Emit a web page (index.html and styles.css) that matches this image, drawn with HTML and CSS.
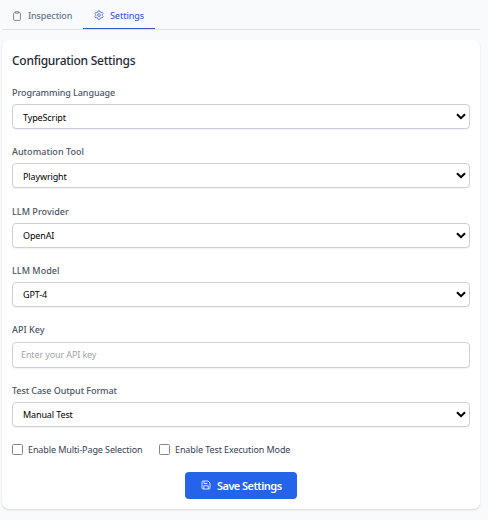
FILE: index.html
```html
<!DOCTYPE html>
<html lang="en">
<head>
<meta charset="utf-8">
<title>Configuration Settings</title>
<link rel="stylesheet" href="styles.css">
</head>
<body>
<div class="app">
  <nav class="tabs">
    <a class="tab tab-inspection">
      <svg class="tab-icon" viewBox="0 0 10 10"><path d="M3.4 1.4H2.6a1 1 0 0 0-1 1v6a1 1 0 0 0 1 1h4.8a1 1 0 0 0 1-1v-6a1 1 0 0 0-1-1h-.8M3.4.7h3.2v1.5H3.4z"/></svg>
      <span>Inspection</span>
    </a>
    <a class="tab tab-settings active">
      <svg class="tab-icon" viewBox="1 1 22 22"><path stroke-width="2" d="M10 3h4l.7 2.6 1.8 1 2.6-.7 2 3.5-1.9 1.9v1.8l1.9 1.9-2 3.5-2.6-.7-1.8 1L14 21.500h-4l-.7-2.700-1.8-1-2.600.7-2-3.500 1.900-1.900v-1.800L2.900 9.400l2-3.500 2.600.7 1.800-1z"/><circle cx="12" cy="12.200" r="3" stroke-width="2"/></svg>
      <span>Settings</span>
    </a>
  </nav>
  <main class="card">
    <h1 class="title"><span>Configuration Settings</span></h1>
    <div class="field">
      <div class="label"><span>Programming Language</span></div>
      <div class="select"><span>TypeScript</span><svg class="chevron" viewBox="0 0 10 7"><path d="M1 1.2l4 4 4-4"/></svg></div>
    </div>
    <div class="field">
      <div class="label label-short"><span>Automation Tool</span></div>
      <div class="select"><span>Playwright</span><svg class="chevron" viewBox="0 0 10 7"><path d="M1 1.2l4 4 4-4"/></svg></div>
    </div>
    <div class="field">
      <div class="label label-short"><span>LLM Provider</span></div>
      <div class="select"><span>OpenAI</span><svg class="chevron" viewBox="0 0 10 7"><path d="M1 1.2l4 4 4-4"/></svg></div>
    </div>
    <div class="field">
      <div class="label label-short"><span>LLM Model</span></div>
      <div class="select"><span>GPT-4</span><svg class="chevron" viewBox="0 0 10 7"><path d="M1 1.2l4 4 4-4"/></svg></div>
    </div>
    <div class="field field-input">
      <div class="label label-short"><span>API Key</span></div>
      <input class="input" type="text" placeholder="Enter your API key">
    </div>
    <div class="field">
      <div class="label"><span>Test Case Output Format</span></div>
      <div class="select"><span>Manual Test</span><svg class="chevron" viewBox="0 0 10 7"><path d="M1 1.2l4 4 4-4"/></svg></div>
    </div>
    <div class="checks">
      <label class="check"><i class="box"></i><span>Enable Multi-Page Selection</span></label>
      <label class="check"><i class="box"></i><span>Enable Test Execution Mode</span></label>
    </div>
    <button class="save">
      <svg class="save-icon" viewBox="0 0 10 10"><path d="M1 2a1 1 0 0 1 1-1h5l2 2v5a1 1 0 0 1-1 1H2a1 1 0 0 1-1-1zM3 1v2.500h3.500M2.800 9V5.700h4.400V9"/></svg>
      <span>Save Settings</span>
    </button>
  </main>
</div>
</body>
</html>
```
FILE: styles.css
```css
* { box-sizing: border-box; }
body {
  margin: 0;
  height: 520px;
  overflow: hidden;
  background: #f9fafb;
  font-family: "Noto Sans", "Open Sans", sans-serif;
  font-size: 9px;
  color: #374151;
}
.app { width: 483px; height: 520px; padding: 0 3px 0 2px; background: #f8fafc; }
.tabs { display: flex; height: 30px; border-bottom: 1px solid #dfe3e9; }
.tab {
  display: flex;
  align-items: center;
  height: 29px;
  padding: 2px 10px 0;
  gap: 6px;
  color: #64748b;
  font-weight: 500;
  letter-spacing: -.12px;
  white-space: nowrap;
}
.tab-inspection { width: 81px; }
.tab-settings { width: 72px; padding-left: 11px; }
.tab.active { color: #3b5fd9; border-bottom: 1px solid #3159c8; }
.tab-icon { width: 10px; height: 10px; flex: none; fill: none; stroke: currentColor; stroke-width: 1; opacity: .85; }
.card {
  display: flex;
  flex-direction: column;
  width: 478px;
  height: 469px;
  margin-top: 10px;
  padding: 12px 10px 0;
  border-radius: 7px;
  background: #fff;
  box-shadow: 0 1px 2px rgba(0, 0, 0, .14);
}
.title { margin: 0 0 16px; font-size: 12px; line-height: 18px; font-weight: 500; letter-spacing: -.27px; color: #1f2937; white-space: nowrap; }
.field { height: 59.3px; flex: none; }
.field-input { height: 60.8px; }
.label { height: 18px; line-height: 14px; font-weight: 500; letter-spacing: -.08px; color: #4b5563; white-space: nowrap; }
.label-short { letter-spacing: .04px; }
.field-input .label { height: 19px; }
.select, .input {
  display: flex;
  align-items: center;
  width: 458px;
  height: 25px;
  border: 1px solid #cdd0d5;
  border-radius: 4px;
  background: #fff;
  box-shadow: 0 1px 1px rgba(0, 0, 0, .05);
}
.select { justify-content: space-between; padding: 1px 3px 0 10px; letter-spacing: -.12px; color: #000; }
.chevron { width: 10px; height: 7px; margin-top: -1px; fill: none; stroke: #000; stroke-width: 2; }
.input { height: 26px; padding: 0 8px 1px; font: inherit; letter-spacing: -.12px; outline: none; }
.input::placeholder { color: #9ca3af; opacity: 1; }
.checks { display: flex; gap: 16px; height: 12px; }
.check { display: flex; align-items: center; gap: 5px; height: 12px; letter-spacing: -.1px; white-space: nowrap; }
.check:first-child { width: 131px; }
.box { flex: none; width: 11px; height: 11px; border: 1px solid #858585; border-radius: 1.5px; background: #fff; }
.save {
  display: flex;
  align-items: center;
  align-self: center;
  width: 112px;
  height: 27px;
  margin-top: 17px;
  padding: 0 15px 1px 16px;
  gap: 6px;
  border: 0;
  border-radius: 4px;
  background: #2563eb;
  color: #fff;
  font: 600 11px "Noto Sans", sans-serif;
  letter-spacing: -.55px;
  white-space: nowrap;
}
.save-icon { width: 10px; height: 10px; flex: none; fill: none; stroke: #dbe6ff; stroke-width: 1; }
```
